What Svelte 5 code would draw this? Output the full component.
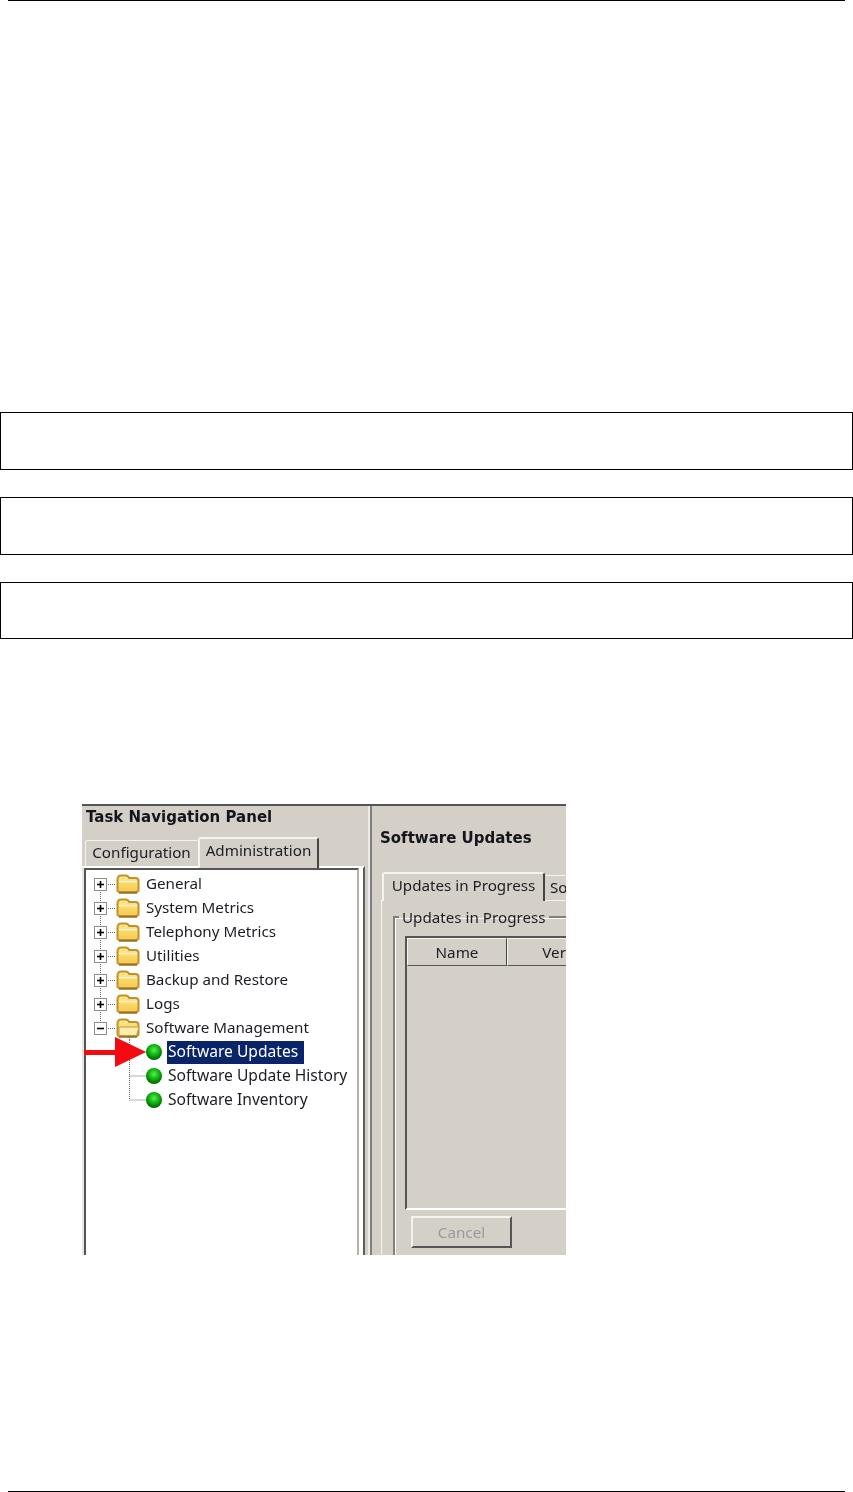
<script>
  const groups = [
    { name: 'General', line: 'down' },
    { name: 'System Metrics', line: 'both' },
    { name: 'Telephony Metrics', line: 'both' },
    { name: 'Utilities', line: 'both' },
    { name: 'Backup and Restore', line: 'both' },
    { name: 'Logs', line: 'both' },
    { name: 'Software Management', line: 'up', open: true }
  ];
  const tasks = [
    { name: 'Software Updates', selected: true, end: false },
    { name: 'Software Update History', selected: false, end: false },
    { name: 'Software Inventory', selected: false, end: true }
  ];
</script>

{#snippet folder(open)}
  <path d="M29.5 8 Q29.5 3.5 33 3.5 L38 3.5 Q40 3.5 41 6 L47.5 6 Q50.5 6 50.5 9 L50.5 18 Q50.5 20 48 20 L32 20 Q29.5 20 29.5 18 Z" fill="url(#fold)" stroke="#c2922a" stroke-width="2" />
  {#if open}
    <path d="M31 11 L51 11 L48.5 19.5 L31 19.5 Z" fill="#fdeeb0" stroke="#c79a3c" stroke-width="1" />
  {:else}
    <path d="M31 9.5 L49 9.5" stroke="#fff6cc" stroke-width="1.4" />
  {/if}
  <path d="M31 21 L49 21" stroke="#8a6418" stroke-width="1.4" />
{/snippet}

<div class="page">
  <svg class="defs" width="0" height="0" aria-hidden="true">
    <defs>
      <radialGradient id="led" cx="0.5" cy="0.38" r="0.62">
        <stop offset="0" stop-color="#5fe85f" />
        <stop offset="0.5" stop-color="#0cb80c" />
        <stop offset="1" stop-color="#025c02" />
      </radialGradient>
      <linearGradient id="fold" x1="0" y1="0" x2="0" y2="1">
        <stop offset="0" stop-color="#fde98f" />
        <stop offset="1" stop-color="#f4c94e" />
      </linearGradient>
    </defs>
  </svg>

  <div class="rule"></div>

  <div class="boxes">
    <div class="box"></div>
    <div class="box"></div>
    <div class="box short"></div>
  </div>

  <div class="shot">
    <div class="nav">
      <div class="nav-title">Task Navigation Panel</div>
      <div class="nav-tabs">
        <div class="nav-tab">Configuration</div>
        <div class="nav-tab active">Administration</div>
      </div>
      <div class="tree-frame">
        <div class="tree">
          {#each groups as g}
            <div class="row">
              <svg class="gutter" width="56" height="24" viewBox="0 0 56 24">
                {#if g.line !== 'down'}<path d="M12.5 0 V6" class="dots" />{/if}
                {#if g.line !== 'up'}<path d="M12.5 18 V24" class="dots" />{/if}
                <path d="M18 12.5 H28" class="dots" />
                {#if g.open}<path d="M41.5 21 V24" class="dots" />{/if}
                <rect x="6.5" y="6.5" width="12" height="12" fill="#fff" stroke="#8c8c8c" />
                <path d="M9 12.5 H16" stroke="#000" stroke-width="1.6" />
                {#if !g.open}<path d="M12.5 9 V16" stroke="#000" stroke-width="1.6" />{/if}
                {@render folder(g.open)}
              </svg>
              <span class="label">{g.name}</span>
            </div>
          {/each}
          {#each tasks as t}
            <div class="row">
              <svg class="gutter" width="78" height="24" viewBox="0 0 78 24">
                <path d={t.end ? 'M41.5 0 V12 H58' : 'M41.5 0 V24 M41.5 12 H58'} class="dots" />
                <circle cx="66" cy="12" r="8" fill="url(#led)" />
              </svg>
              <span class="label task" class:selected={t.selected}>{t.name}</span>
            </div>
          {/each}
        </div>
      </div>
      <svg class="arrow" width="64" height="32" viewBox="0 0 64 32">
        <path d="M0 13 H31 V0 L62 15 L31 30 V18 H0 Z" fill="#f40a12" />
      </svg>
    </div>

    <div class="main">
      <div class="main-title">Software Updates</div>
      <div class="main-tabs">
        <div class="main-tab active">Updates in Progress</div>
        <div class="main-tab">Software</div>
      </div>
      <div class="tab-panel">
        <fieldset>
          <legend>Updates in Progress</legend>
          <div class="grid">
            <div class="grid-head">
              <div class="cell name">Name</div>
              <div class="cell version">Version</div>
            </div>
          </div>
          <div class="cancel">Cancel</div>
        </fieldset>
      </div>
    </div>
  </div>

  <div class="spacer"></div>
  <div class="rule"></div>
</div>

<style>
:global(body) { margin: 0; background: #fff; }
.page {
  width: 853px; height: 1492px;
  display: flex; flex-direction: column;
  font-family: "Noto Sans", sans-serif;
  overflow: hidden;
}
.defs { position: absolute; }
.rule { height: 1px; margin: 0 8px; background: #000; flex: none; }
.boxes { margin-top: 411px; display: flex; flex-direction: column; gap: 27px; }
.box { height: 56px; border: 1px solid #000; }
.box.short { height: 55px; }
.spacer { flex: 1; }

.shot {
  margin: 165px 0 0 82px;
  width: 484px; height: 451px;
  display: flex; flex: none;
  overflow: hidden;
  background: #d4d0c8;
  border-top: 2px solid #555;
  box-sizing: border-box;
  color: #1c1c24;
  font-size: 15.2px;
  filter: blur(0.5px);
}

.nav { position: relative; width: 288px; flex: none; border-right: 2px solid #ecebe6; box-sizing: border-box; }
.nav-title { height: 31px; padding-left: 4px; font-family: "DejaVu Sans", sans-serif; font-size: 15px; font-weight: 700; line-height: 22px; color: #14141c; white-space: nowrap; }
.nav-tabs { height: 29px; display: flex; align-items: flex-end; padding-left: 3px; }
.nav-tab {
  height: 26px; width: 112px; box-sizing: border-box;
  border: 1px solid #f4f3ef; border-bottom: 0; border-right: 0; border-radius: 3px 0 0 0;
  text-align: center; line-height: 23px;
}
.nav-tab.active {
  height: 31px; width: 121px; margin-left: 1px; margin-bottom: -2px;
  position: relative; z-index: 1; background: #d4d0c8;
  border-top: 2px solid #f4f3ef; border-left: 2px solid #f4f3ef;
  border-right: 2px solid #444;
  border-radius: 3px 3px 0 0;
  line-height: 22px;
}
.tree-frame {
  width: 283px; height: 430px; box-sizing: border-box;
  border: 2px solid; border-color: #fff #5c5c5c #555 #e8e6e0;
  background: #fff; padding-right: 4px;
}
.tree {
  height: 100%; box-sizing: border-box;
  border: 2px solid; border-color: #555 #b4b1a9 #eeece7 #555;
  background: #fff; padding: 2px 0 0 2px;
}
.row { height: 24px; display: flex; align-items: center; }
.gutter { flex: none; }
.dots { stroke: #666; stroke-dasharray: 1 1; fill: none; }
.label { margin-left: 2px; white-space: nowrap; line-height: 21px; padding-bottom: 2px; }
.label.task { margin-left: 1px; padding: 0 3px 2px 1px; font-size: 15.6px; }
.label.selected { background: #0a246a; color: #fff; padding-right: 6px; }
.arrow { position: absolute; left: 2px; top: 231px; }

.main { flex: 1; min-width: 0; border-left: 2px solid #808080; }
.main-title { height: 66px; padding-left: 8px; font-family: "DejaVu Sans", sans-serif; font-size: 15px; font-weight: 700; line-height: 64px; color: #14141c; white-space: nowrap; }
.main-tabs { height: 28px; display: flex; align-items: flex-end; padding-left: 10px; white-space: nowrap; }
.main-tab {
  height: 25px; padding: 0 0 0 4px; box-sizing: border-box;
  border-top: 1px solid #f4f3ef; line-height: 23px; margin-left: 1px;
}
.main-tab.active {
  width: 163px; height: 29px; padding: 0; margin: 0 0 -1px 0; text-align: center;
  position: relative; z-index: 1; background: #d4d0c8;
  border: 2px solid #f4f3ef; border-bottom: 0; border-right: 2px solid #444;
  border-radius: 3px 3px 0 0; line-height: 22px; flex: none;
}
.tab-panel { margin-left: 9px; height: 400px; border-left: 1px solid #f4f3ef; border-top: 1px solid #f4f3ef; padding: 6px 0 0 11px; }
fieldset {
  margin: 0; padding: 0; min-width: 0;
  width: 300px; height: 400px; box-sizing: border-box;
  border: 2px solid #f4f3ef; border-color: #808080 transparent transparent #808080;
  box-shadow: inset 1px 1px 0 #fff;
}
legend { margin-left: 4px; padding: 0 3px; line-height: 20px; white-space: nowrap; }
.grid {
  margin: 9px 0 0 10px; height: 274px; box-sizing: border-box;
  border-top: 2px solid #555; border-left: 2px solid #555; border-bottom: 2px solid #fff;
}
.grid-head { display: flex; height: 28px; }
.cell {
  height: 28px; box-sizing: border-box; text-align: center; line-height: 27px; flex: none;
  border: 1px solid; border-color: #f4f3ef #444 #555 #f4f3ef;
}
.cell.name { width: 100px; }
.cell.version { width: 124px; }
.cancel {
  margin: 6px 0 0 16px; width: 101px; height: 32px; box-sizing: border-box;
  border: 2px solid; border-color: #f4f3ef #555 #555 #f4f3ef;
  text-align: center; line-height: 28px; color: #9a9a9a;
}
</style>
